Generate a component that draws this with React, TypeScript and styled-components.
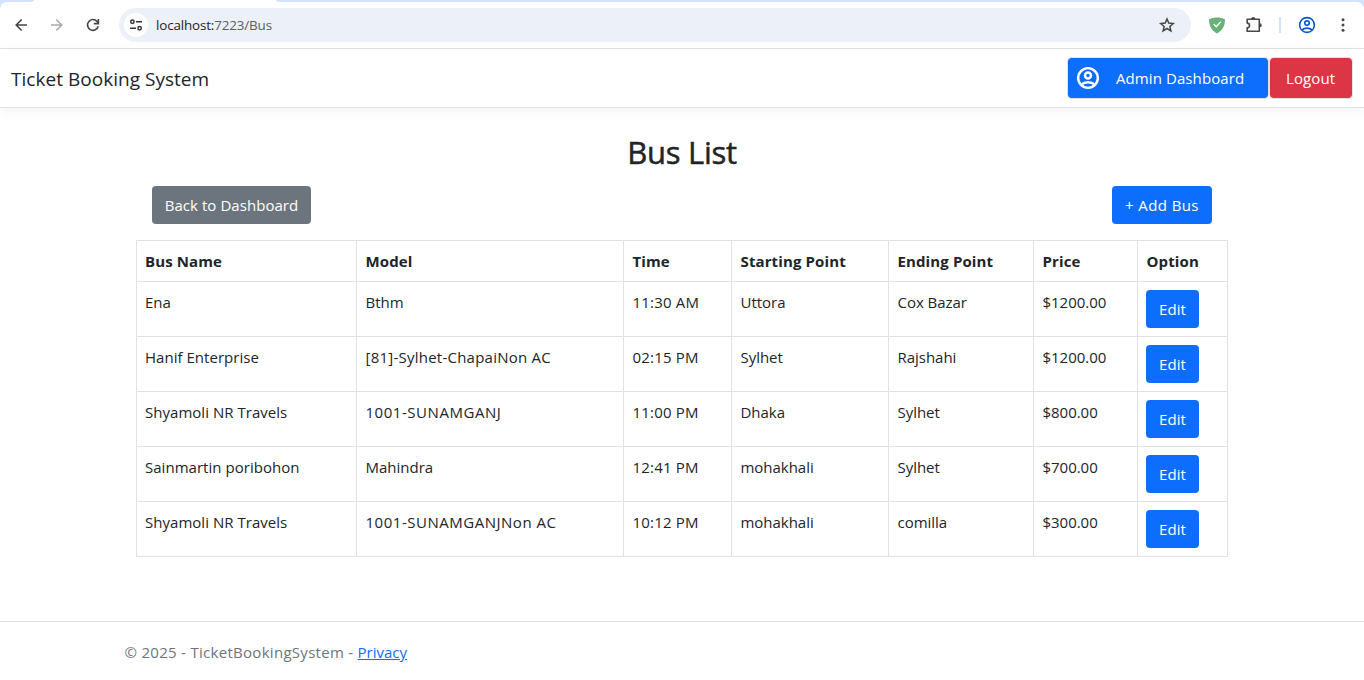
import React from 'react';
import styled, { createGlobalStyle } from 'styled-components';

const GlobalStyle = createGlobalStyle`
  * { box-sizing: border-box; }
  body {
    margin: 0;
    background: #fff;
    color: #212529;
    font-family: "Open Sans", "Noto Sans", sans-serif;
    font-size: 15px;
    line-height: 24px;
    overflow: hidden;
  }
`;

const Page = styled.div`
  display: flex;
  flex-direction: column;
  height: 680px;
`;

const TabStrip = styled.div`
  display: flex;
  justify-content: space-between;
  height: 2px;
  flex: none;
`;

const TabGap = styled.div<{ $width: number; $side: 'left' | 'right' }>`
  width: ${(p) => p.$width}px;
  background: #d3e3fd;
  border-bottom-${(p) => (p.$side === 'left' ? 'right' : 'left')}-radius: 5px 2px;
`;

const ToolbarFrame = styled.div`
  flex: none;
  background: #d3e3fd;
`;

const BrowserBar = styled.div`
  height: 47px;
  display: flex;
  align-items: center;
  background: #fff;
  border-bottom: 1px solid #dfe1e3;
  border-radius: 7px 7px 0 0;
  padding: 0 12px;
`;

const NavIcon = styled.span<{ $color?: string; $gap?: number }>`
  display: flex;
  flex: none;
  color: ${(p) => p.$color ?? '#474747'};
  margin-right: ${(p) => p.$gap ?? 0}px;
`;

const AddressBar = styled.div`
  width: 1072px;
  flex: none;
  height: 34px;
  display: flex;
  align-items: center;
  background: #ecf0f9;
  border-radius: 17px;
  padding: 0 14px 0 5px;
  margin-right: 18px;
`;

const SiteBadge = styled.span`
  width: 24px;
  height: 24px;
  border-radius: 50%;
  background: #fff;
  display: flex;
  align-items: center;
  justify-content: center;
`;

const Url = styled.span`
  flex: 1;
  margin-left: 8px;
  font-size: 13.4px;
  letter-spacing: -0.14px;
  color: #1f1f1f;
`;

const UrlPath = styled.span`
  color: #5b5e63;
`;

const Divider = styled.span`
  flex: none;
  width: 2px;
  height: 16px;
  background: #d3e3fd;
  margin-right: 17px;
`;

const Navbar = styled.header`
  flex: none;
  height: 59px;
  display: flex;
  align-items: center;
  justify-content: space-between;
  padding: 0 11px;
  border-bottom: 1px solid #dee2e6;
  box-shadow: 0 4px 12px rgba(0, 0, 0, 0.05);
`;

const Brand = styled.span`
  padding-top: 2px;
  font-size: 19px;
  letter-spacing: 0.03px;
  line-height: 30px;
`;

const NavActions = styled.div`
  display: flex;
`;

const NavButton = styled.a<{ $tone: string; $width: number; $inset: number }>`
  width: ${(p) => p.$width}px;
  height: 42px;
  display: flex;
  align-items: center;
  padding: 0 0 0 ${(p) => p.$inset}px;
  gap: 16px;
  background: ${(p) => p.$tone};
  background-clip: padding-box;
  border: 1px solid #dee2e6;
  border-radius: 4px;
  color: #fff;
  letter-spacing: 0.09px;
  white-space: nowrap;
`;

const Main = styled.main`
  flex: none;
  width: 1092px;
  height: 513px;
  margin: 0 auto;
`;

const Title = styled.h2`
  margin: 25px 0 15px;
  font-size: 31px;
  font-weight: 500;
  line-height: 38px;
  letter-spacing: -0.3px;
  text-align: center;
  -webkit-text-stroke: 0.5px currentColor;
`;

const ActionRow = styled.div`
  display: flex;
  justify-content: space-between;
  padding: 0 16px;
  margin-bottom: 16px;
`;

const Button = styled.a<{ $tone?: string; $width: number; $tracking?: number }>`
  width: ${(p) => p.$width}px;
  height: 38px;
  display: flex;
  align-items: center;
  justify-content: center;
  background: ${(p) => p.$tone ?? '#0d6efd'};
  border-radius: 4px;
  color: #fff;
  letter-spacing: ${(p) => p.$tracking ?? 0.05}px;
  white-space: nowrap;
`;

const Table = styled.table`
  width: 1092px;
  table-layout: fixed;
  border-collapse: collapse;
`;

const Col = styled.col<{ $width: number }>`
  width: ${(p) => p.$width}px;
`;

const Row = styled.tr<{ $height: number }>`
  height: ${(p) => p.$height}px;
`;

const HeadCell = styled.th`
  padding: 8px;
  border: 1px solid #dee2e6;
  text-align: left;
  vertical-align: top;
  font-weight: 700;
  letter-spacing: 0.12px;
  white-space: nowrap;

  &:not(:first-child) { padding-left: 8.5px; }
`;

const Cell = styled.td<{ $tracking?: number }>`
  padding: 8px;
  border: 1px solid #dee2e6;
  vertical-align: top;
  letter-spacing: ${(p) => p.$tracking ?? 0}px;
  white-space: nowrap;

  &:not(:first-child):not(:last-child) { padding-left: 8.5px; }
`;

const Footer = styled.footer`
  height: 59px;
  border-top: 1px solid #dee2e6;
  padding: 18px 0 0 124.5px;
  color: #6c757d;
  letter-spacing: 0.29px;
`;

const FooterLink = styled.a`
  color: #0d6efd;
  letter-spacing: 0;
  text-decoration: underline;
`;

const Arrow = ({ flip = false }: { flip?: boolean }) => (
  <svg width="18" height="18" viewBox="0 0 18 18" fill="none" stroke="currentColor" strokeWidth="1.6" transform={flip ? 'scale(-1 1)' : undefined}>
    <path d="M15 9H4.500M9.700 3.500 4.200 9l5.500 5.500" />
  </svg>
);

const Reload = () => (
  <svg width="18" height="18" viewBox="0 0 18 18" fill="none" stroke="currentColor" strokeWidth="1.6">
    <path d="M14.200 10.200a5.400 5.400 0 1 1-1.200-4.800L14.400 7M14.400 3v4.600H9.800" />
  </svg>
);

const SiteControls = () => (
  <svg width="14" height="14" viewBox="0 0 14 14" fill="none" stroke="#333" strokeWidth="1.5">
    <circle cx="3.4" cy="3.8" r="1.7" />
    <path d="M7 3.8h6M1 10.2h6" />
    <circle cx="10.6" cy="10.2" r="1.7" />
  </svg>
);

const Star = () => (
  <svg width="20" height="20" viewBox="0 0 20 20" fill="none" stroke="currentColor" strokeWidth="1.5" strokeLinejoin="miter">
    <path d="m10 4 1.75 4.1 4.5.4-3.4 2.95 1.05 4.4L10 13.5l-3.9 2.35 1.05-4.4-3.4-2.95 4.5-.4z" />
  </svg>
);

const Shield = () => (
  <svg width="16" height="17" viewBox="0 0 16 17">
    <path d="M8 .4C10.5.4 13.5 1 16 2.2 16 9 13.500 13.500 8 16.500 2.500 13.500 0 9 0 2.200 2.500 1 5.500.4 8 .4z" fill="#67b279" />
    <path d="m4.600 7 2.700 2.700 4.500-4.900" fill="none" stroke="#fff" strokeWidth="1.300" />
  </svg>
);

const Puzzle = () => (
  <svg width="18" height="18" viewBox="0 0 18 18">
    <path d="M2.200 3.300H14.300V15.300H2.200V11.700A2.300 2.300 0 0 0 2.200 7.100z" fill="none" stroke="currentColor" strokeWidth="1.600" strokeLinejoin="round" />
    <path d="M6.200 3a2.100 2.100 0 0 1 4.200 0zM14.800 7.300a2 2 0 0 1 0 4z" fill="currentColor" />
  </svg>
);

const Account = ({ size, weight }: { size: number; weight: number }) => (
  <svg width={size} height={size} viewBox="0 0 20 20" fill="none" stroke="currentColor" strokeWidth={weight}>
    <circle cx="10" cy="10" r="8.200" />
    <circle cx="10" cy="7.900" r="2.500" />
    <path d="M4.400 15.500c1.600-1.400 3.500-2 5.600-2s4 .6 5.600 2" />
  </svg>
);

const More = () => (
  <svg width="18" height="18" viewBox="0 0 18 18" fill="currentColor">
    <circle cx="9" cy="3.700" r="1.500" />
    <circle cx="9" cy="9" r="1.500" />
    <circle cx="9" cy="14.300" r="1.500" />
  </svg>
);

const columns = [
  { label: 'Bus Name', width: 220 },
  { label: 'Model', width: 267 },
  { label: 'Time', width: 108 },
  { label: 'Starting Point', width: 157 },
  { label: 'Ending Point', width: 145 },
  { label: 'Price', width: 104 },
  { label: 'Option', width: 90 },
];

const buses = [
  { modelTracking: 0, values: ['Ena', 'Bthm', '11:30 AM', 'Uttora', 'Cox Bazar', '$1200.00'] },
  { modelTracking: 0.24, values: ['Hanif Enterprise', '[81]-Sylhet-ChapaiNon AC', '02:15 PM', 'Sylhet', 'Rajshahi', '$1200.00'] },
  { modelTracking: 0.54, values: ['Shyamoli NR Travels', '1001-SUNAMGANJ', '11:00 PM', 'Dhaka', 'Sylhet', '$800.00'] },
  { modelTracking: 0, values: ['Sainmartin poribohon', 'Mahindra', '12:41 PM', 'mohakhali', 'Sylhet', '$700.00'] },
  { modelTracking: 0.52, values: ['Shyamoli NR Travels', '1001-SUNAMGANJNon AC', '10:12 PM', 'mohakhali', 'comilla', '$300.00'] },
];

const trackingFor = (column: number, modelTracking: number) => {
  if (column === 1) return modelTracking;
  if (column === 2) return 0.2;
  return column === 0 ? 0.03 : -0.03;
};

export default function App() {
  return (
    <Page>
      <GlobalStyle />
      <TabStrip>
        <TabGap $width={34} $side="left" />
        <TabGap $width={1088} $side="right" />
      </TabStrip>
      <ToolbarFrame>
        <BrowserBar>
          <NavIcon $gap={18}><Arrow /></NavIcon>
          <NavIcon $gap={18} $color="#ababab"><Arrow flip /></NavIcon>
          <NavIcon $gap={17}><Reload /></NavIcon>
          <AddressBar>
            <SiteBadge><SiteControls /></SiteBadge>
            <Url>localhost:<UrlPath>7223/Bus</UrlPath></Url>
            <NavIcon><Star /></NavIcon>
          </AddressBar>
          <NavIcon $gap={20}><Shield /></NavIcon>
          <NavIcon $gap={16}><Puzzle /></NavIcon>
          <Divider />
          <NavIcon $gap={18} $color="#0b57d0"><Account size={18} weight={1.8} /></NavIcon>
          <NavIcon><More /></NavIcon>
        </BrowserBar>
      </ToolbarFrame>
      <Navbar>
        <Brand>Ticket Booking System</Brand>
        <NavActions>
          <NavButton $tone="#0d6efd" $width={202} $inset={8}>
            <Account size={24} weight={2} />
            <span>Admin Dashboard</span>
          </NavButton>
          <NavButton $tone="#dc3545" $width={84} $inset={16}>Logout</NavButton>
        </NavActions>
      </Navbar>
      <Main>
        <Title>Bus List</Title>
        <ActionRow>
          <Button $tone="#6c757d" $width={159}>Back to Dashboard</Button>
          <Button $width={100} $tracking={0.4}>+ Add Bus</Button>
        </ActionRow>
        <Table>
          <colgroup>
            {columns.map((c) => <Col key={c.label} $width={c.width} />)}
          </colgroup>
          <thead>
            <Row $height={41}>
              {columns.map((c) => <HeadCell key={c.label}>{c.label}</HeadCell>)}
            </Row>
          </thead>
          <tbody>
            {buses.map((bus, i) => (
              <Row key={i} $height={55}>
                {bus.values.map((value, j) => (
                  <Cell key={j} $tracking={trackingFor(j, bus.modelTracking)}>{value}</Cell>
                ))}
                <Cell><Button $width={53}>Edit</Button></Cell>
              </Row>
            ))}
          </tbody>
        </Table>
      </Main>
      <Footer>
        © 2025 - TicketBookingSystem - <FooterLink>Privacy</FooterLink>
      </Footer>
    </Page>
  );
}
